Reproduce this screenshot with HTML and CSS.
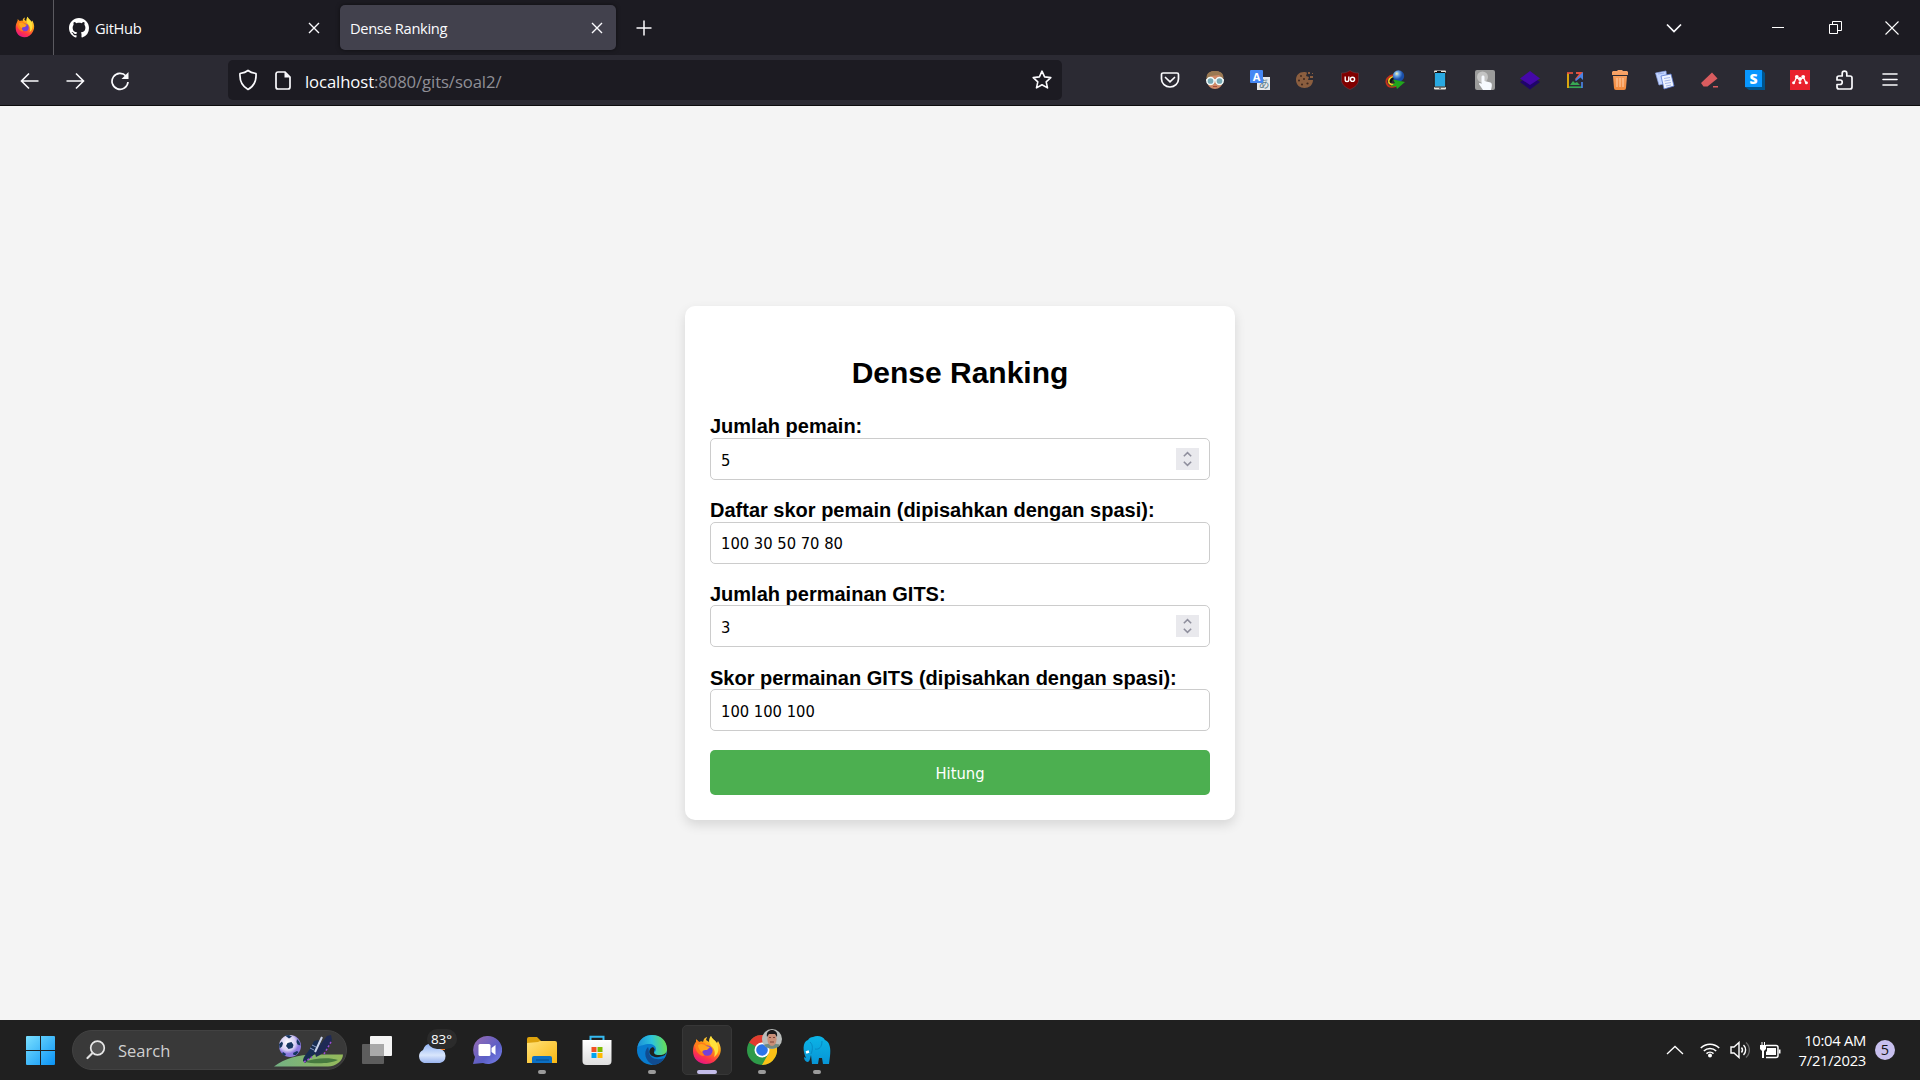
FILE: index.html
```html
<!DOCTYPE html>
<html lang="id">
<head>
<meta charset="utf-8">
<title>Dense Ranking</title>
<link rel="stylesheet" href="styles.css">
</head>
<body>
<svg class="defs" width="0" height="0" aria-hidden="true">
  <defs>
    <linearGradient id="fxBody" x1=".8" y1="0" x2=".3" y2="1"><stop offset="0" stop-color="#fff44f"/><stop offset=".4" stop-color="#ff980e"/><stop offset=".75" stop-color="#ff3647"/><stop offset="1" stop-color="#e31587"/></linearGradient>
    <linearGradient id="win" x1="0" y1="0" x2="1" y2="1"><stop offset="0" stop-color="#7ae0ff"/><stop offset="1" stop-color="#0a93f5"/></linearGradient>
    <linearGradient id="cloud" x1="0" y1="0" x2="0" y2="1"><stop offset="0" stop-color="#8fb2f3"/><stop offset=".6" stop-color="#d9e6fc"/><stop offset="1" stop-color="#9ab4ee"/></linearGradient>
    <linearGradient id="chat" x1="0" y1="0" x2="1" y2="1"><stop offset="0" stop-color="#9a6bb0"/><stop offset=".6" stop-color="#5b5fc7"/><stop offset="1" stop-color="#7b83eb"/></linearGradient>
    <linearGradient id="folder" x1="0" y1="0" x2="1" y2="1"><stop offset="0" stop-color="#ffe27a"/><stop offset="1" stop-color="#fbb811"/></linearGradient>
    <linearGradient id="edgeTop" x1="0" y1=".5" x2="1" y2=".4"><stop offset="0" stop-color="#1b8fd8"/><stop offset=".5" stop-color="#2cc3dc"/><stop offset="1" stop-color="#6be04e"/></linearGradient>
    <linearGradient id="elephant" x1="0" y1="0" x2="0" y2="1"><stop offset="0" stop-color="#0cb4e6"/><stop offset="1" stop-color="#0795d6"/></linearGradient>
    <linearGradient id="grass" x1="0" y1="0" x2="1" y2="0"><stop offset="0" stop-color="#74b184"/><stop offset="1" stop-color="#95ba5a"/></linearGradient>
    <linearGradient id="trash" x1="0" y1="0" x2="0" y2="1"><stop offset="0" stop-color="#f9a66c"/><stop offset="1" stop-color="#f28a3c"/></linearGradient>
    <linearGradient id="store" x1="0" y1="0" x2="0" y2="1"><stop offset="0" stop-color="#ffffff"/><stop offset="1" stop-color="#dedede"/></linearGradient>
    <radialGradient id="globe" cx=".35" cy=".3"><stop offset="0" stop-color="#fff6b0"/><stop offset=".4" stop-color="#6ea9e8"/><stop offset="1" stop-color="#1a4ea8"/></radialGradient>
    <radialGradient id="ball" cx=".4" cy=".35"><stop offset="0" stop-color="#fff"/><stop offset=".7" stop-color="#d5cdf3"/><stop offset="1" stop-color="#8d7ae0"/></radialGradient>
    <symbol id="firefox" viewBox="0 0 30 30">
      <path fill="url(#fxBody)" d="M19 1c1 3 4 4 6 7l1-2c3 5 4 10 1 15-3 5-7 8-13 8C7 29 1 24 1 16c0-4 1-7 3-9V4l3 3c2-1 3-1 4 0l1-3c1-1 2-2 3-2l-1 3 3 2c0-3 1-5 2-6z"/>
      <path fill="#ff7c1a" d="M3 9l2-4 3 3c3-1 5 0 6 2l4 1-4 3-4 1c0 2 2 4 5 4l-4 2C6 20 3 15 3 9z"/>
      <circle cx="15.4" cy="15.6" r="5.2" fill="#7541d8"/>
      <path fill="#ffa41b" d="M6 10c3-2 6-1 8 1l4 1-3 3c-2 0-4 0-5 2-2-1-4-4-4-7z"/>
      <path fill="#ffe23c" d="M19 1c1 4 6 5 7 11 1 5-1 8-4 10 2-5 0-9-3-11-2-3-2-7 0-10z"/>
    </symbol>
    <symbol id="cross" viewBox="0 0 12 12"><path d="M1 1l10 10M11 1L1 11" fill="none" stroke="#fbfbfe" stroke-width="1.4"/></symbol>
    <symbol id="spin" viewBox="0 0 23 24"><path d="M7.5 9l4-4 4 4M7.5 15l4 4 4-4" fill="none" stroke="#8f8f9d" stroke-width="1.7"/></symbol>
  </defs>
</svg>

<header class="tabstrip">
  <div class="fx-view"><svg width="20" height="22" viewBox="0 0 30 30" preserveAspectRatio="none"><use href="#firefox"/></svg></div>
  <div class="tab">
    <svg width="20" height="20" viewBox="0 0 16 16"><path fill="#fff" d="M8 0C3.58 0 0 3.58 0 8c0 3.54 2.29 6.53 5.47 7.59.4.07.55-.17.55-.38 0-.19-.01-.82-.01-1.49-2.01.37-2.53-.49-2.69-.94-.09-.23-.48-.94-.82-1.13-.28-.15-.68-.52-.01-.53.63-.01 1.08.58 1.23.82.72 1.21 1.87.87 2.33.66.07-.52.28-.87.51-1.07-1.78-.2-3.64-.89-3.64-3.95 0-.87.31-1.59.82-2.15-.08-.2-.36-1.02.08-2.12 0 0 .67-.21 2.2.82.64-.18 1.32-.27 2-.27s1.36.09 2 .27c1.53-1.04 2.2-.82 2.2-.82.44 1.1.16 1.92.08 2.12.51.56.82 1.27.82 2.15 0 3.07-1.87 3.75-3.65 3.95.29.25.54.73.54 1.48 0 1.07-.01 1.93-.01 2.2 0 .21.15.46.55.38A8.01 8.01 0 0 0 16 8c0-4.42-3.58-8-8-8z"/></svg>
    <span class="tab-name github">GitHub</span>
    <svg width="12" height="12"><use href="#cross"/></svg>
  </div>
  <div class="tab active">
    <span class="tab-name">Dense Ranking</span>
    <svg width="12" height="12"><use href="#cross"/></svg>
  </div>
  <svg class="new-tab" width="16" height="16" viewBox="0 0 16 16"><path d="M8 .5v15M.5 8h15" stroke="#fbfbfe" stroke-width="1.5"/></svg>
  <div class="window-tools">
    <svg width="16" height="10" viewBox="0 0 16 10"><path d="M1 1.500l7 7 7-7" fill="none" stroke="#fbfbfe" stroke-width="1.700"/></svg>
    <svg class="min" width="12" height="12" viewBox="0 0 12 12"><path d="M0 5.500h12" stroke="#fff"/></svg>
    <svg class="restore" width="13" height="13" viewBox="0 0 13 13"><path d="M.5 3.500h8v9h-8zM3.500 3.500v-3h9v9h-4" fill="none" stroke="#fff"/></svg>
    <svg width="14" height="14" viewBox="0 0 14 14"><path d="M.5.5l13 13M13.500.500l-13 13" stroke="#fff" stroke-width="1.100"/></svg>
  </div>
</header>

<nav class="toolbar">
  <div class="history">
    <svg width="20" height="20" viewBox="0 0 20 20"><path d="M18.500 10H2M9 2.500L1.500 10 9 17.500" fill="none" stroke="#fbfbfe" stroke-width="1.600"/></svg>
    <svg width="20" height="20" viewBox="0 0 20 20"><path d="M1.500 10H18M11 2.500l7.500 7.500-7.500 7.500" fill="none" stroke="#fbfbfe" stroke-width="1.600"/></svg>
    <svg width="20" height="20" viewBox="0 0 20 20"><path d="M16 5a8 8 0 1 0 2 6" fill="none" stroke="#fbfbfe" stroke-width="1.700"/><path d="M18.500 1v7h-7z" fill="#fbfbfe"/></svg>
  </div>
  <div class="urlbar">
    <svg width="20" height="22" viewBox="0 0 20 22"><path d="M10 1.500c2.500 2 5 2.500 8 3 .5 7-1.500 12.500-8 16-6.500-3.500-8.500-9-8-16 3-.5 5.500-1 8-3z" fill="none" stroke="#fbfbfe" stroke-width="1.700" stroke-linejoin="round"/></svg>
    <svg width="16" height="19" viewBox="0 0 16 19"><path d="M3 1h7l5 5v10a2 2 0 0 1-2 2H3a2 2 0 0 1-2-2V3a2 2 0 0 1 2-2z" fill="none" stroke="#fbfbfe" stroke-width="1.700"/><path d="M9.500 1l5.500 5.500H9.500z" fill="#fbfbfe"/></svg>
    <span class="url"><b>localhost</b>:8080/gits/soal2/</span>
    <svg width="20" height="20" viewBox="0 0 20 20"><path d="M10 1.200l2.600 5.700 6.200.7-4.600 4.200 1.300 6.100L10 14.800l-5.500 3.100 1.300-6.100L1.200 7.600l6.200-.7z" fill="none" stroke="#fbfbfe" stroke-width="1.600" stroke-linejoin="round"/></svg>
  </div>
  <div class="extensions">
    <svg viewBox="0 0 20 20"><path d="M3 3h14a1.500 1.500 0 0 1 1.500 1.500V9a8.500 8 0 0 1-17 0V4.500A1.500 1.500 0 0 1 3 3z" fill="none" stroke="#fbfbfe" stroke-width="1.700"/><path d="M5.500 7.500L10 11.800l4.500-4.300" fill="none" stroke="#fbfbfe" stroke-width="1.700" stroke-linecap="round"/></svg>
    <svg viewBox="0 0 20 20"><path d="M2 10C1 4 5 1 10 1s9 3 8 9c0 6-4 9-8 9s-8-3-8-9z" fill="#cf8a68"/><path d="M1.500 9C1 3 5 1 10 1s9 2 8.500 8L14 5 6 6z" fill="#9a7953"/><path d="M1 10h18" stroke="#fff" stroke-width="1.500"/><circle cx="5.500" cy="11" r="3.600" fill="#77a8b4" stroke="#f2fbfb" stroke-width="1.500"/><circle cx="14.500" cy="11" r="3.600" fill="#77a8b4" stroke="#f2fbfb" stroke-width="1.500"/><path d="M8 16.500h4" stroke="#a94d3c"/></svg>
    <svg viewBox="0 0 20 20"><path fill="#e6e8ea" d="M7 7h13v13H7z"/><text x="8.500" y="18" class="glyph-jp">あ</text><rect width="13" height="13" rx="1" fill="#4587f4"/><text x="6.500" y="10.800" class="glyph-a">A</text></svg>
    <svg viewBox="0 0 20 20"><path fill="#8b5e3f" d="M9 2c1 0 3 0 3 1l-1 3 3 1-1 3 5 0c0 5-4 8-8.500 8S1 15 1 10 4 2 9 2z"/><g fill="#3c261d"><circle cx="6" cy="6" r=".9"/><circle cx="4" cy="10.500" r="1"/><circle cx="9" cy="9" r="1"/><circle cx="7" cy="14.500" r="1"/><circle cx="12.500" cy="13.500" r="1.100"/></g><path fill="#8b5e3f" d="M13 2h2v2h-2zM15 6h3v2h-3zM17 3h1v1h-1z"/></svg>
    <svg viewBox="0 0 20 20"><path fill="#800000" stroke="#6b4850" stroke-width=".5" d="M10 .5c3 2 5 2.500 8.500 2.500v7c0 4-3 7-8.500 9.500C4.500 17 1.500 14 1.500 10V3C5 3 7 2.500 10 .5z"/><path d="M5.200 6.500v3.300a1.800 1.800 0 0 0 3.600 0V6.500" fill="none" stroke="#fff" stroke-width="1.400"/><circle cx="12.500" cy="9.300" r="2.100" fill="none" stroke="#fff" stroke-width="1.400"/></svg>
    <svg viewBox="0 0 20 20"><path d="M9 5C3 6 0 10 2 14s6 3 10 2" fill="none" stroke="#c5311b" stroke-width="1.800"/><path d="M9 6.500c-4 1-6 3.500-5 6s4 2.500 7 2" fill="none" stroke="#f3d321" stroke-width="1.800"/><path d="M10 8c-3 0-5 2.500-4 4.500" fill="none" stroke="#111" stroke-width="2"/><circle cx="13.500" cy="6" r="5.700" fill="url(#globe)"/><path fill="#20a51c" d="M8 9.500l12 2.500-8 7-1-3-6 1 5-4z"/></svg>
    <svg viewBox="0 0 20 20"><rect x="4" y=".5" width="12" height="19" rx="1" fill="#ece9df"/><path fill="#29a9e1" d="M4.500 3h11v13.500h-11z"/><path stroke="#111" d="M4.500 2.500h11M4.500 17h11M4.300 3v14M15.700 3v14M7 1.500h4"/><circle cx="10" cy="18.300" r=".7" fill="#222"/></svg>
    <svg viewBox="0 0 20 20"><rect width="20" height="20" rx="2" fill="#9b9b9b"/><circle cx="7.500" cy="7" r="5.500" fill="#c4c4c4"/><path fill="#f7faff" d="M6.500 7c0-2 3-2 3 0v4l6 1.500c2 1 1.500 4 .5 7.500H8l-4-6c0-1.500 1.500-1 2.500 0z"/></svg>
    <svg viewBox="0 0 20 20"><path fill="#1f0569" d="M0 12l3-2h14l3 2-10 7.500z"/><path fill="#4508a8" d="M10 1l10 7.500-10 6.500L0 8.500z"/></svg>
    <svg viewBox="0 0 20 20"><path fill="none" stroke="#fbbc0a" stroke-width="1.700" d="M3 3v15"/><path fill="none" stroke="#37a853" stroke-width="1.700" d="M4 17.200h13"/><path fill="none" stroke="#e6513f" stroke-width="1.700" d="M2 3h6"/><path fill="none" stroke="#4a83e6" stroke-width="1.700" d="M17 12v6"/><path fill="#e6513f" d="M11 2h7l-2 3-5 5-1-1 4-5h-3z"/><path fill="#4a83e6" d="M18 2v8l-2.500-2.500L11 11l-1-1z"/><path fill="#37a853" d="M5 15l3-4 2 2 2-1 3 3z"/></svg>
    <svg viewBox="0 0 20 20"><path fill="url(#trash)" d="M7 1l1-1h4l1 1h4l1 1v3H2V2l1-1zM3 6h14l-1 12a2 2 0 0 1-2 2H6a2 2 0 0 1-2-2z"/><path d="M7 8v9M10 8v9M13 8v9" stroke="#ffc79b" stroke-width="1.200"/></svg>
    <svg viewBox="0 0 20 20"><path fill="#c3d5ff" stroke="#8ba3e6" stroke-width=".7" d="M.500 3L11 1l1 12-8 2z"/><path fill="#eef3ff" stroke="#5877d0" stroke-width=".8" d="M6 6l10-2 3 12-10 3z"/><path d="M3 4l6-1M9 8.500l6-1M9.500 11l6-1M10 13.500l6-1M11 16l5-1" stroke="#8fa5e4" stroke-width=".8"/></svg>
    <svg viewBox="0 0 20 20"><path fill="#d95c5f" d="M12 2.500l5.500 6-10 8H3.500L1 13zM13 16h5v1.500h-5z"/></svg>
    <svg viewBox="0 0 20 20"><path fill="#00548c" d="M0 17l17-17 3 3v17H4z"/><path fill="#0997ff" d="M0 0h17v17H0z"/><text x="8.500" y="13.500" class="glyph-s">S</text></svg>
    <svg viewBox="0 0 20 20"><path fill="#e9202d" d="M0 0h20v20H0z"/><g fill="#fff"><circle cx="6.800" cy="6.800" r="1.900"/><circle cx="13.200" cy="6.800" r="1.900"/><circle cx="10" cy="9" r="1.900"/><circle cx="3.600" cy="12.700" r="1.500"/><circle cx="16.400" cy="12.700" r="1.500"/><circle cx="10" cy="12.700" r="1.400"/></g><path d="M4 12.300c1.500-.5.800-3.800 2.700-4.500M16 12.300c-1.500-.5-.8-3.800-2.700-4.500M6.500 7.500L10 9.500l3.500-2" fill="none" stroke="#fff" stroke-width="1.300"/></svg>
    <svg viewBox="0 0 20 20"><path d="M4 6h3.200V3.500a2.200 2.200 0 0 1 4.600 0V6H15a2 2 0 0 1 2 2v9a2 2 0 0 1-2 2H4a2 2 0 0 1-2-2v-2.500h3a2 2 0 0 0 0-4.500H2V8a2 2 0 0 1 2-2z" fill="none" stroke="#fbfbfe" stroke-width="1.700" stroke-linejoin="round"/></svg>
    <svg viewBox="0 0 20 20"><path d="M3 4h14M3 9.500h14M3 15h14" stroke="#fbfbfe" stroke-width="1.600" stroke-linecap="round"/></svg>
  </div>
</nav>

<main class="page">
  <form class="card">
    <h2>Dense Ranking</h2>
    <label for="n">Jumlah pemain:</label>
    <div class="field"><input id="n" type="text" value="5"><svg class="spinner"><use href="#spin"/></svg></div>
    <label for="scores">Daftar skor pemain (dipisahkan dengan spasi):</label>
    <div class="field"><input id="scores" type="text" value="100 30 50 70 80"></div>
    <label for="m">Jumlah permainan GITS:</label>
    <div class="field"><input id="m" type="text" value="3"><svg class="spinner"><use href="#spin"/></svg></div>
    <label for="gits">Skor permainan GITS (dipisahkan dengan spasi):</label>
    <div class="field"><input id="gits" type="text" value="100 100 100"></div>
    <button type="button">Hitung</button>
  </form>
</main>

<footer class="taskbar">
  <svg class="start" width="29" height="29" viewBox="0 0 29 29"><path fill="url(#win)" d="M1 0h13v14H0V1a1 1 0 0 1 1-1zM15 0h13a1 1 0 0 1 1 1v13H15zM0 15h14v14H1a1 1 0 0 1-1-1zM15 15h14v13a1 1 0 0 1-1 1H15z"/></svg>
  <div class="search">
    <svg width="20" height="20" viewBox="0 0 20 20"><circle cx="11.500" cy="8" r="6.800" fill="#555" stroke="#e8e8e8" stroke-width="1.700"/><path d="M6.500 13L1.500 18" stroke="#e0e0e0" stroke-width="2.200" stroke-linecap="round"/></svg>
    <span>Search</span>
    <svg class="soccer" width="72" height="36" viewBox="0 0 72 36"><path fill="url(#grass)" d="M1 34.500c10-8 25-12 40-12h29c0 6-7 12-15 12z"/><path fill="#477a3f" d="M31 30c10-4 25-5 34-2-8 4-24 4-34 2z"/><circle cx="17" cy="14" r="11" fill="url(#ball)"/><g fill="#173761"><path d="M14.500 11l4-1 2 3-1 3-4 1-2.500-3zM12 3.500l4-.5 3 1.500-3 2zM6 12l3-2.500 1 2-1 3-2.500 2zM10 20l3 2-1 2-3-2zM20 21l4-2 1.500 1-2.500 3-2.500 0zM24 7l2.500 3 1 3.500-3-1-1-2.500z"/></g><path fill="#172d52" d="M30 29c0-5 5-8 8-14l3-6 4-1 3 3-4 9-8 7-4 4z"/><path fill="#1f2a55" d="M42 21l8-12 4-5 4-1 1 5-4 8-8 7-4 2z"/><path stroke="#c9d3ea" stroke-width="2" d="M42 20l7-15"/><path stroke="#8fa2cc" d="M37 16l4 2M39 13l4 2"/><path d="M31 30l8-5M51 22l7-12" stroke="#9c4bd7" stroke-width="1.500" stroke-dasharray="2 2"/></svg>
  </div>
  <div class="apps">
    <div class="app"><svg viewBox="0 0 30 30"><rect x="8" y="1" width="22" height="20" rx="1" fill="#f4f4f4"/><rect x="0" y="9" width="22" height="20" rx="1" fill="#646464" fill-opacity=".9"/><path fill="#a9a9a9" d="M8 9h14v12H8z"/></svg></div>
    <div class="app weather"><svg viewBox="0 0 30 30"><path fill="#f77b1c" d="M20 9h8v6h-8z"/><path fill="url(#cloud)" d="M7 28a7 7 0 0 1-1-13 9 9 0 0 1 17-1 7.200 7.200 0 0 1 0 14z"/></svg><span class="temp">83°</span></div>
    <div class="app"><svg viewBox="0 0 30 30"><path fill="url(#chat)" d="M15 1a14 14 0 1 1-4 27l-10 1 2-7A14 14 0 0 1 15 1z"/><rect x="6.500" y="9" width="12" height="12" rx="1.500" fill="#fff"/><path fill="#fff" d="M19.500 13l4-3v10l-4-3z"/></svg></div>
    <div class="app open"><svg viewBox="0 0 30 30"><path fill="#dda20c" d="M0 4a2 2 0 0 1 2-2h8l4 4v6H0z"/><path fill="url(#folder)" d="M0 8l11-1 2-1h15a2 2 0 0 1 2 2v20H0z"/><path fill="#0c70c4" d="M5 28v-5a2 2 0 0 1 2-2h16a2 2 0 0 1 2 2v5z"/><path d="M9 25h13" stroke="#064d89"/></svg></div>
    <div class="app"><svg viewBox="0 0 30 30"><path d="M8.500 6V1.800h13V6" fill="none" stroke="#35baf0" stroke-width="2"/><path fill="url(#store)" d="M.5 5h29v21a4 4 0 0 1-4 4h-21a4 4 0 0 1-4-4z"/><path fill="#f25022" d="M9.500 12h5v5h-5z"/><path fill="#7fba00" d="M15.500 12h5v5h-5z"/><path fill="#00a4ef" d="M9.500 18h5v5h-5z"/><path fill="#ffb900" d="M15.500 18h5v5h-5z"/></svg></div>
    <div class="app open"><svg viewBox="0 0 30 30"><circle cx="15" cy="15" r="15" fill="#087ccf"/><path fill="url(#edgeTop)" d="M.5 12C2 4 8 0 15 0c9 0 15 6 15 14 0 5-3 7-7 7s-6-1-6-3c0-1 2-1 2-4 0-3-3-5-7-5S3 11 .5 12z"/><path fill="#104c91" d="M11 12c-5 5-3 14 5 18 5 0 9-3 11-7-7 3-14 0-15-5-.5-3 0-4-1-6z"/><path fill="#202020" d="M16 12c-3 1-4.500 4-3 7 3 4 9 4 15 1l2-4c-2 4-5 4-8 4-4 0-5-1-5-3 0-2 2-2-1-5z"/></svg></div>
    <div class="app open current"><svg><use href="#firefox"/></svg></div>
    <div class="app open chrome"><svg viewBox="0 0 30 30"><circle cx="15" cy="15" r="15" fill="#2e9b49"/><path fill="#e33b2e" d="M15 15L2 7.500A15 15 0 0 1 28 7.500H15z"/><path fill="#fbc116" d="M15 7.500h13A15 15 0 0 1 15 30l6.500-11.500z"/><circle cx="15" cy="15" r="7.500" fill="#fff"/><circle cx="15" cy="15" r="5.800" fill="#2c74e8"/></svg><svg class="avatar" viewBox="0 0 20 20"><circle cx="10" cy="10" r="10" fill="#b9bcba"/><path fill="#718b82" d="M2 16c3-2 13-2 16 0-4 5-12 5-16 0z"/><ellipse cx="10" cy="10" rx="4.600" ry="7" fill="#c98f78"/><path fill="#1b1a1c" d="M5 8C4 3 7 1 10 1s6 2 5 7l-2-3H7z"/><path d="M8 13h4M7 8.500h2M11 8.500h2" stroke="#7c4337"/></svg></div>
    <div class="app open"><svg viewBox="0 0 30 30"><path fill="url(#elephant)" d="M11 2c4-2 10-1 12 3 5 2 6 9 5 16l-1 8h-6l-1-6h-3l-1 6h-6l-1-9-1 4c-1 5-6 3-6-2l2 1C1 17 0 7 6 5c1-2 3-3 5-3z"/><path d="M20 6c0 6-3 9-7 8M8 7c3 3 3 7 1 12" stroke="#078ac5" fill="none"/><path d="M4 17.500l3-1" stroke="#fff" stroke-width="2.500"/></svg></div>
  </div>
  <div class="tray">
    <svg class="up" width="18" height="10" viewBox="0 0 18 10"><path d="M1 9l8-7.500L17 9" fill="none" stroke="#fff" stroke-width="1.300"/></svg>
    <svg class="wifi" width="20" height="16" viewBox="0 0 20 16"><path d="M.8 6a13 13 0 0 1 18.400 0M3.800 9a8.800 8.800 0 0 1 12.400 0M6.500 11.600a5 5 0 0 1 7 0" fill="none" stroke="#fff" stroke-width="1.500"/><circle cx="10" cy="13.500" r="2" fill="#fff"/></svg>
    <svg class="sound" width="20" height="18" viewBox="0 0 20 18"><path d="M1 6h3l5-4.500v15L4 12H1z" fill="none" stroke="#fff" stroke-width="1.400"/><path d="M11.500 6.500a4 4 0 0 1 0 5M13.500 4a7 7 0 0 1 0 10" fill="none" stroke="#fff" stroke-width="1.400"/><path d="M16 1.500a10 10 0 0 1 0 15" fill="none" stroke="#686868" stroke-width="1.400"/></svg>
    <svg width="21" height="17" viewBox="0 0 21 17"><path d="M6 3.500h10a2 2 0 0 1 2 2v8a2 2 0 0 1-2 2H6" fill="none" stroke="#fff" stroke-width="1.500"/><path fill="#fff" d="M7 6h9v7H6v-3l1-1zM19 7.500h1.500v4H19zM1.500 0v3H0v4l2 2v7h2V9l2-2V3H5V0H4v3H2.500V0z"/></svg>
    <div class="clock"><span>10:04 AM</span><span>7/21/2023</span></div>
    <span class="badge">5</span>
  </div>
</footer>
</body>
</html>
```
FILE: styles.css
```css
* { box-sizing: border-box; }
html, body { margin: 0; height: 100%; overflow: hidden; }
body { display: flex; flex-direction: column; font-family: "Open Sans", "Noto Sans", sans-serif; background: #f4f4f4; }
svg { display: block; flex: none; }
.defs { position: absolute; }

.tabstrip { height: 55px; flex: none; display: flex; align-items: center; background: #1c1b22; color: #fbfbfe; }
.fx-view { width: 54px; height: 55px; padding: 0 0 1px 15px; display: flex; align-items: center; border-right: 1px solid #5b5a60; }
.tab { height: 45px; width: 281px; margin-right: 5px; padding: 0 15px 0 15px; display: flex; align-items: center; gap: 6px; border-radius: 5px; }
.tab.active { width: 276px; padding: 0 13px 0 10px; margin-right: 20px; background: #42414d; box-shadow: 0 0 4px rgba(0,0,0,.5); }
.tab-name { flex: 1; padding-top: 1px; font-size: 14.7px; letter-spacing: -.35px; white-space: nowrap; }
.window-tools { margin-left: auto; padding-right: 21px; display: flex; align-items: center; }
.min { margin-left: 90px; }
.restore { margin: 0 43px 0 45px; }

.toolbar { height: 51px; flex: none; display: flex; align-items: center; padding: 0 20px; background: #2b2a33; border-bottom: 1px solid #0c0c0d; }
.history { display: flex; gap: 25px; width: 208px; padding-top: 1px; }
.urlbar { width: 834px; height: 40px; padding: 0 10px; display: flex; align-items: center; gap: 17px; border-radius: 5px; background: #1c1b22; }
.url { flex: 1; margin-left: -3px; padding-top: 2px; font-size: 16.7px; color: #8f8f96; letter-spacing: -.1px; }
.url b { color: #fbfbfe; font-weight: 400; }
.extensions { margin-left: auto; display: flex; gap: 25px; }
.extensions svg { width: 20px; height: 20px; }
.glyph-jp { font: 11px "Noto Sans CJK JP", sans-serif; fill: #607d8b; }
.glyph-a { font: bold 11px "Open Sans", sans-serif; fill: #fff; text-anchor: middle; }
.glyph-s { font: 800 14px "Open Sans", sans-serif; fill: #fff; text-anchor: middle; }

.page { flex: 1; display: flex; align-items: center; justify-content: center; }
.card { width: 550px; height: 514px; padding: 25px; border-radius: 10px; background: #fff; box-shadow: 0 5px 12px rgba(0,0,0,.12); font-family: "Liberation Sans", Arial, sans-serif; }
.card h2 { margin: 25px 0; font-size: 30px; line-height: 34px; text-align: center; }
.card label { display: block; font-size: 20px; font-weight: 700; line-height: 23px; }
.card label[for="m"], .card label[for="gits"] { padding-top: 1px; margin-bottom: -1px; }
.field { height: 42px; margin-bottom: 18.7px; padding: 0 10px; display: flex; align-items: center; border: 1px solid #ccc; border-radius: 5px; }
.field input { flex: 1; min-width: 0; padding: 2px 0 0; border: 0; outline: 0; background: none; color: #000; font: 16.4px "DejaVu Sans Condensed", "DejaVu Sans", sans-serif; font-stretch: condensed; }
.spinner { width: 23px; height: 22px; background: #e9e9ed; }
.card button { display: block; width: 100%; height: 45px; padding: 2px 0 0; border: 0; border-radius: 5px; background: #4caf50; color: #fff; font: 16.4px "DejaVu Sans Condensed", "DejaVu Sans", sans-serif; font-stretch: condensed; }

.taskbar { height: 60px; flex: none; display: flex; align-items: center; padding: 0 25px 0 26px; background: #202020; color: #fff; }
.search { width: 275px; height: 40px; margin: 0 5px 0 17px; padding: 0 1px 0 13px; display: flex; align-items: center; border-radius: 20px; background: #393939; border: 1px solid #424242; overflow: hidden; }
.search span { flex: 1; padding-left: 12px; color: #d0d0d0; font-size: 16.500px; }
.apps { display: flex; gap: 5px; margin-left: -.5px; }
.app { width: 50px; height: 50px; position: relative; display: flex; align-items: center; justify-content: center; border-radius: 5px; }
.app svg { width: 30px; height: 30px; }
.current { background: #2e2e2e; border: 1px solid #373737; }
.open::after { content: ""; position: absolute; left: 21px; bottom: 1px; width: 8px; height: 4px; border-radius: 2px; background: #9b9b9b; }
.current::after { left: 14px; bottom: 0; width: 20px; background: #c4bdea; }
.temp { position: absolute; left: 20px; top: 4px; width: 30px; height: 20px; border-radius: 10px; background: #2b2b2b; font-size: 13.5px; line-height: 20px; text-align: center; }
.app .avatar { position: absolute; left: 25px; top: 4px; width: 20px; height: 20px; }
.tray { margin-left: auto; display: flex; align-items: center; }
.up { margin-right: 16px; }
.wifi { margin-right: 10px; }
.sound { margin-right: 10px; }
.clock { width: 85px; display: flex; flex-direction: column; align-items: flex-end; font-size: 14.8px; line-height: 20px; letter-spacing: -.3px; }
.badge { width: 20px; height: 20px; margin-left: 9px; border-radius: 50%; background: #c7bfed; color: #111; font-size: 14.5px; line-height: 20px; text-align: center; }
```
